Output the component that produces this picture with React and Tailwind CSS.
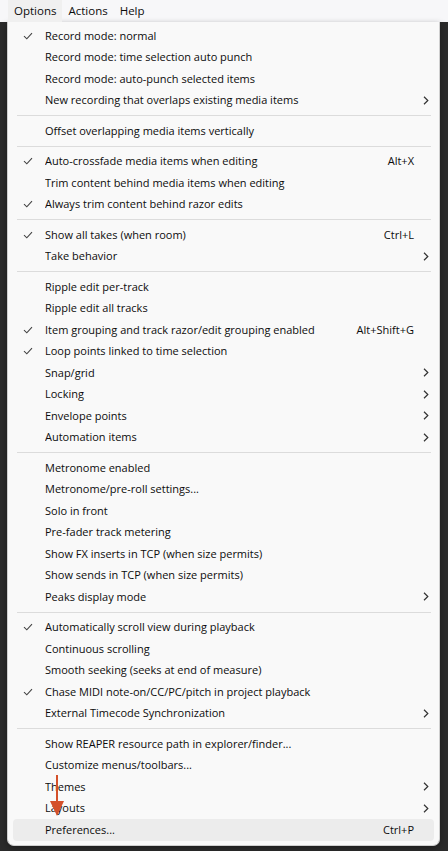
const groups = [
  [
    { label: 'Record mode: normal', checked: true },
    { label: 'Record mode: time selection auto punch' },
    { label: 'Record mode: auto-punch selected items' },
    { label: 'New recording that overlaps existing media items', sub: true },
  ],
  [{ label: 'Offset overlapping media items vertically' }],
  [
    { label: 'Auto-crossfade media items when editing', checked: true, key: 'Alt+X' },
    { label: 'Trim content behind media items when editing' },
    { label: 'Always trim content behind razor edits', checked: true },
  ],
  [
    { label: 'Show all takes (when room)', checked: true, key: 'Ctrl+L' },
    { label: 'Take behavior', sub: true },
  ],
  [
    { label: 'Ripple edit per-track' },
    { label: 'Ripple edit all tracks' },
    { label: 'Item grouping and track razor/edit grouping enabled', checked: true, key: 'Alt+Shift+G' },
    { label: 'Loop points linked to time selection', checked: true },
    { label: 'Snap/grid', sub: true },
    { label: 'Locking', sub: true },
    { label: 'Envelope points', sub: true },
    { label: 'Automation items', sub: true },
  ],
  [
    { label: 'Metronome enabled' },
    { label: 'Metronome/pre-roll settings...' },
    { label: 'Solo in front' },
    { label: 'Pre-fader track metering' },
    { label: 'Show FX inserts in TCP (when size permits)' },
    { label: 'Show sends in TCP (when size permits)' },
    { label: 'Peaks display mode', sub: true },
  ],
  [
    { label: 'Automatically scroll view during playback', checked: true },
    { label: 'Continuous scrolling' },
    { label: 'Smooth seeking (seeks at end of measure)' },
    { label: 'Chase MIDI note-on/CC/PC/pitch in project playback', checked: true },
    { label: 'External Timecode Synchronization', sub: true },
  ],
  [
    { label: 'Show REAPER resource path in explorer/finder...' },
    { label: 'Customize menus/toolbars...' },
    { label: 'Themes', sub: true },
    { label: 'Layouts', sub: true },
    { label: 'Preferences...', key: 'Ctrl+P', active: true },
  ],
];

function Check() {
  return (
    <svg width="10" height="8" viewBox="0 0 10 8" fill="none">
      <path d="M1 4.2 L3.8 6.8 L9 1.2" stroke="#444" strokeWidth="1.1" />
    </svg>
  );
}

function Chevron() {
  return (
    <svg width="6" height="9" viewBox="0 0 6 9" fill="none">
      <path d="M1 0.8 L4.8 4.5 L1 8.2" stroke="#333" strokeWidth="1.2" />
    </svg>
  );
}

function Row({ item }) {
  return (
    <div
      className={`flex h-[21.5px] items-center rounded-[4px] ${
        item.active ? 'bg-[#ececec]' : ''
      }`}
    >
      <div className="flex w-[32px] shrink-0 justify-center pr-[2px]">
        {item.checked && <Check />}
      </div>
      <div className="flex-1 truncate">{item.label}</div>
      {item.key && <div>{item.key}</div>}
      <div className="flex w-[20px] shrink-0 justify-center pl-[4px]">
        {item.sub && <Chevron />}
      </div>
    </div>
  );
}

export default function App() {
  return (
    <div
      className="relative h-[851px] w-[448px] overflow-hidden bg-[#2b2b2b] text-[11px] text-[#0c0c0c]"
      style={{ fontFamily: '"Open Sans", "Noto Sans", sans-serif' }}
    >
      {/* menu bar */}
      <div className="flex h-[22px] items-stretch bg-[#f7f7f9] pl-[8px] text-[11.5px]">
        <div className="flex items-center bg-[#f0f0f0] px-[6px]">Options</div>
        <div className="flex items-center px-[6px]">Actions</div>
        <div className="flex items-center px-[6px]">Help</div>
      </div>

      {/* dropdown */}
      <div className="ml-[7px] w-[433px] rounded-b-[7px] border border-t-0 border-[#cfcfcf] bg-[#f9f9f9] px-[5px] pb-[4px] pt-[3px] shadow-[0_2px_6px_rgba(0,0,0,0.35)]">
        {groups.map((g, gi) => (
          <div key={gi}>
            {gi > 0 && (
              <div className="flex h-[9px] items-center pl-[4px] pr-[3px]">
                <div className="h-px w-full bg-[#dcdcdc]" />
              </div>
            )}
            {g.map((item) => (
              <Row key={item.label} item={item} />
            ))}
          </div>
        ))}
      </div>

      {/* annotation arrow */}
      <svg className="absolute left-[49px] top-[775px]" width="16" height="42" viewBox="0 0 16 42">
        <path d="M8 0 V28" stroke="#d4502a" strokeWidth="2" />
        <path d="M1 26 H15 L8 41 Z" fill="#d4502a" />
      </svg>
    </div>
  );
}
